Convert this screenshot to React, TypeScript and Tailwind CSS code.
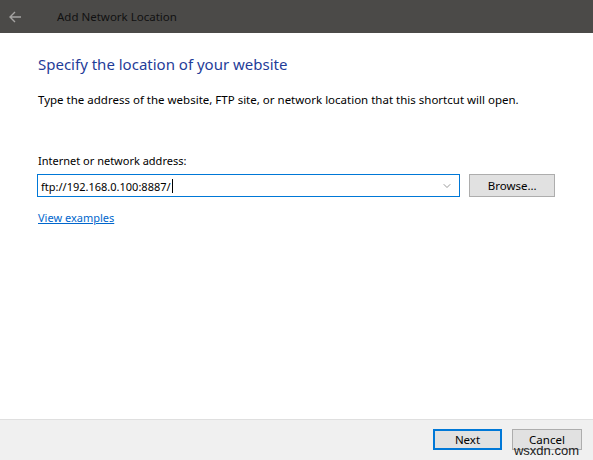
import { ChevronDown } from "lucide-react";

// Wizard page of the "Add Network Location" dialog
export default function App() {
  return (
    <div className="relative flex h-[460px] w-[593px] flex-col overflow-hidden bg-white font-['Noto_Sans',sans-serif] text-[11.5px] text-black">
      {/* Title bar */}
      <div className="flex h-[33px] shrink-0 items-center bg-[#4b4a48]">
        <svg className="ml-[8px] h-[14px] w-[14px]" viewBox="0 0 14 14" fill="none" stroke="#a5a4a2" strokeWidth="1.4">
          <path d="M13 7H2M7 2L2 7l5 5" />
        </svg>
        <span className="ml-[35px] text-[11.5px] text-[#111]">Add Network Location</span>
      </div>

      {/* Content */}
      <div className="flex flex-1 flex-col px-[38px]">
        <h1 className="mt-[21px] text-[15px] leading-[20px] text-[#1f3d99]">Specify the location of your website</h1>
        <p className="mt-[18px] leading-[16px]">
          Type the address of the website, FTP site, or network location that this shortcut will open.
        </p>

        <label className="mt-[45px] text-[11px] leading-[16px]">Internet or network address:</label>
        <div className="mt-[5px] flex items-center gap-[9px]">
          <div className="ml-[-1px] flex h-[23px] w-[425px] items-center border border-[#0078d7] pl-[3px] pr-[6px]">
            <span className="flex-1 text-[11px] leading-[16px]">
              ftp://192.168.0.100:8887/
              <span className="ml-[1px] inline-block h-[14px] w-[1px] translate-y-[2px] bg-black" />
            </span>
            <ChevronDown className="h-[12px] w-[12px] text-[#777]" strokeWidth={1.5} />
          </div>
          <button className="h-[23px] w-[86px] border border-[#adadad] bg-[#e1e1e1] leading-[16px]">Browse...</button>
        </div>

        <a className="mt-[13px] w-fit text-[11px] leading-[16px] text-[#0066cc] underline">View examples</a>
      </div>

      {/* Footer with navigation buttons */}
      <div className="flex h-[41px] shrink-0 items-start justify-end gap-[10px] border-t border-[#dfdfdf] bg-[#f0f0f0] pr-[11px] pt-[9px]">
        <button className="h-[21px] w-[69px] border-2 border-[#0078d7] bg-[#e1e1e1] leading-[16px]">Next</button>
        <button className="h-[21px] w-[70px] border border-[#adadad] bg-[#e1e1e1] leading-[16px]">Cancel</button>
      </div>

      <span className="absolute bottom-[2px] right-[14px] font-['Liberation_Sans',sans-serif] text-[13px] leading-[14px] text-[#222]">wsxdn.com</span>
    </div>
  );
}
